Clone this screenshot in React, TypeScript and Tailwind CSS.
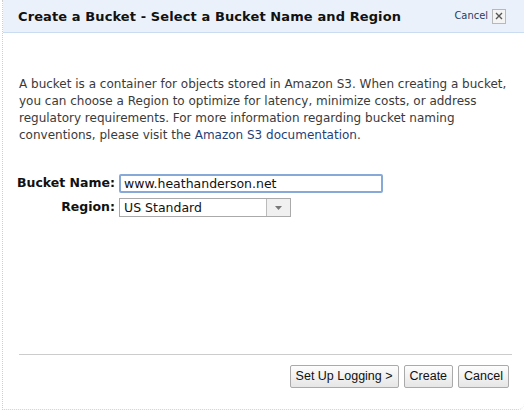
import React, { useState } from "react";

const verdana = { fontFamily: '"DejaVu Sans", Verdana, sans-serif' };

export default function App() {
  const [bucket, setBucket] = useState("www.heathanderson.net");

  return (
    <div className="w-[528px] h-[412px] bg-white overflow-hidden" style={verdana}>
      <div className="ml-[2px] w-[522px] h-[410px] border-l border-b border-dotted border-[#cfcfcf] rounded-br-[6px] flex flex-col">
        {/* header */}
        <div className="h-[33px] bg-[#eaf1fb] border-b border-[#cadcf1] flex items-center justify-between pl-[15px] pr-[18px]">
          <div className="text-[13px] font-bold text-[#111] pt-[1px] tracking-[0.1px]">
            Create a Bucket - Select a Bucket Name and Region
          </div>
          <div className="flex items-center gap-[4px]">
            <span className="text-[11px] text-[#2a3b5a]" style={{ fontFamily: '"DejaVu Sans Condensed", "DejaVu Sans", sans-serif' }}>Cancel</span>
            <span className="w-[14px] h-[15px] border border-[#b8b8b8] bg-[#f4f4f4] flex items-center justify-center">
              <svg width="8" height="8" viewBox="0 0 8 8">
                <path d="M1 1 L7 7 M7 1 L1 7" stroke="#555" strokeWidth="1.4" />
              </svg>
            </span>
          </div>
        </div>

        {/* body */}
        <div className="pl-[16px] pr-[6px] pt-[43px] text-[12px] leading-[17px] text-[#3a3a3a] whitespace-nowrap">
          A bucket is a container for objects stored in Amazon S3. When creating a bucket,
          <br />
          you can choose a Region to optimize for latency, minimize costs, or address
          <br />
          regulatory requirements. For more information regarding bucket naming
          <br />
          conventions, please visit the <span className="text-[#1f3f75]">Amazon S3 documentation</span>.
        </div>

        {/* form */}
        <div className="mt-[30px] grid grid-cols-[112px_auto] gap-x-[4px] gap-y-[5px] items-center text-[12.5px]">
          <label className="text-right font-bold text-[#111]">Bucket Name:</label>
          <input
            value={bucket}
            onChange={(e) => setBucket(e.target.value)}
            className="w-[264px] h-[19px] border-2 border-[#86a9d8] rounded-[2px] px-[3px] text-[12.5px] text-[#111] outline-none"
            style={verdana}
          />
          <label className="text-right font-bold text-[#111]">Region:</label>
          <div className="w-[172px] h-[19px] border border-[#aaa] flex">
            <span className="flex-1 pl-[4px] text-[12.5px] leading-[17px] text-[#111]">US Standard</span>
            <span className="w-[24px] border-l border-[#bbb] bg-[#f0f0f0] flex items-center justify-center">
              <svg width="7" height="4" viewBox="0 0 7 4">
                <path d="M0 0 L7 0 L3.5 4 Z" fill="#777" />
              </svg>
            </span>
          </div>
        </div>

        <div className="flex-1" />

        {/* footer */}
        <div className="ml-[16px] mr-[12px] border-t border-[#cccccc]" />
        <div
          className="flex justify-end gap-[5px] pr-[15px] pt-[10px] pb-[21px]"
          style={{ fontFamily: '"Liberation Sans", Arial, sans-serif' }}
        >
          {["Set Up Logging >", "Create", "Cancel"].map((t) => (
            <button
              key={t}
              className="h-[23px] px-[5px] text-[12.5px] text-[#111] border border-[#aaa] rounded-[2px] bg-gradient-to-b from-[#fdfdfd] to-[#e6e6e6]"
            >
              {t}
            </button>
          ))}
        </div>
      </div>
    </div>
  );
}
